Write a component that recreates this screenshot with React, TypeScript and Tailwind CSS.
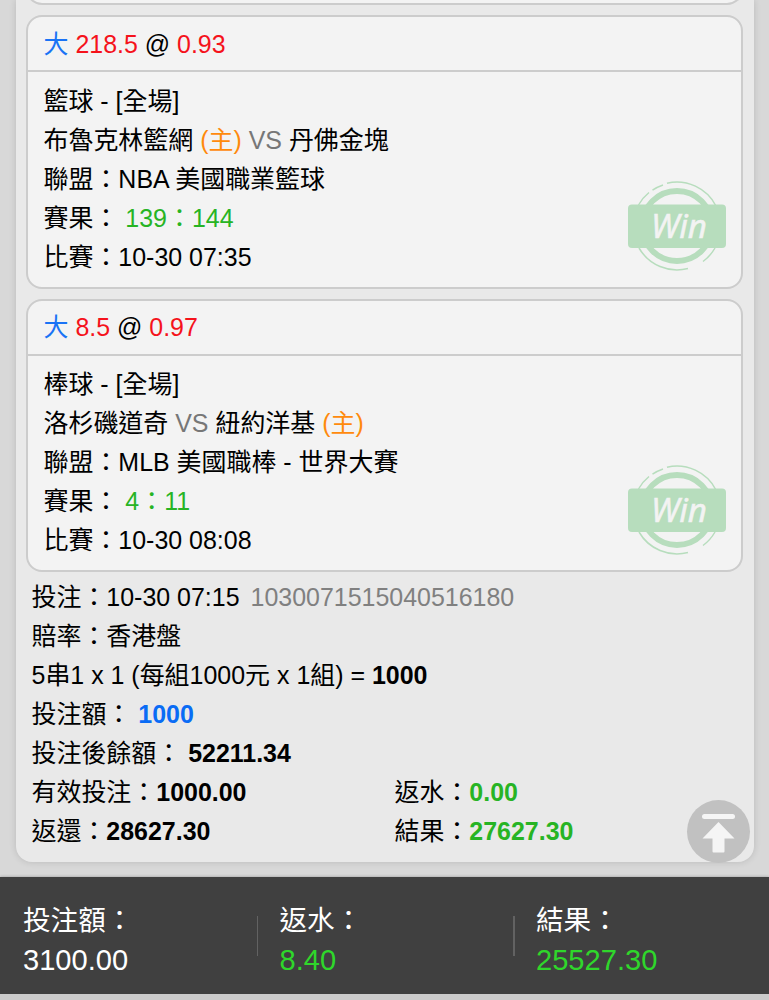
import React from 'react';

interface Team {
  name: string;
  home?: boolean;
}

interface Bet {
  line: string;
  odds: string;
  sport: string;
  teams: [Team, Team];
  league: string;
  score: string;
  time: string;
}

const bets: Bet[] = [
  {
    line: '218.5',
    odds: '0.93',
    sport: '籃球 - [全場]',
    teams: [{ name: '布魯克林籃網', home: true }, { name: '丹佛金塊' }],
    league: 'NBA 美國職業籃球',
    score: '139：144',
    time: '10-30 07:35',
  },
  {
    line: '8.5',
    odds: '0.97',
    sport: '棒球 - [全場]',
    teams: [{ name: '洛杉磯道奇' }, { name: '紐約洋基', home: true }],
    league: 'MLB 美國職棒 - 世界大賽',
    score: '4：11',
    time: '10-30 08:08',
  },
];

const totals = [
  { label: '投注額：', value: '3100.00', color: 'text-white' },
  { label: '返水：', value: '8.40', color: 'text-[#2fd72b]' },
  { label: '結果：', value: '25527.30', color: 'text-[#2fd72b]' },
];

const WinStamp: React.FC = () => (
  <svg width="98" height="90" viewBox="0 0 98 90" className="absolute right-[15px] bottom-[15.5px]">
    <g fill="none" stroke="#b7ddbd">
      <circle cx="49" cy="45" r="35" strokeWidth="5.8" />
      {/* Broken outer ring */}
      <path d="M39 2.2A44 44 0 0 1 88 25" strokeWidth="1.5" />
      <path d="M24.5 9.2A44 44 0 0 1 35 4" strokeWidth="1.5" />
      <path d="M10.5 24A44 44 0 0 1 21 11.5" strokeWidth="1.5" />
      <path d="M11 67A44 44 0 0 0 60 87.6" strokeWidth="1.5" />
      <path d="M75 80.5A44 44 0 0 0 87 67" strokeWidth="1.5" />
    </g>
    <rect y="23.5" width="98" height="43.5" rx="4" fill="#b7ddbd" />
    <text
      x="51"
      y="56.5"
      textAnchor="middle"
      textLength="56"
      lengthAdjust="spacingAndGlyphs"
      fill="#f3f3f3"
      stroke="#f3f3f3"
      strokeWidth="0.5"
      className="font-['Noto_Sans',sans-serif] text-[32px] italic"
    >
      Win
    </text>
  </svg>
);

const TeamName: React.FC<{ team: Team }> = ({ team }) => (
  <>
    {team.name}
    {team.home && <span className="text-[#ff8a0c]"> (主)</span>}
  </>
);

const BetCard: React.FC<{ bet: Bet }> = ({ bet }) => (
  <div className="relative h-[273.5px] rounded-2xl border-2 border-[#cccccc] bg-[#f3f3f3]">
    <div className="h-[55px] border-b-2 border-[#cccccc] px-[15.5px] pt-[7.5px]">
      <span className="text-[#1a73f5]">大</span> <span className="text-[#f5121b]">{bet.line}</span> @{' '}
      <span className="text-[#f5121b]">{bet.odds}</span>
    </div>
    <div className="px-[15.5px] pt-[9.5px]">
      <div>{bet.sport}</div>
      <div>
        <TeamName team={bet.teams[0]} /> <span className="text-[#777777]">VS</span> <TeamName team={bet.teams[1]} />
      </div>
      <div>聯盟：{bet.league}</div>
      <div>
        賽果： <span className="text-[#27b424]">{bet.score}</span>
      </div>
      <div>比賽：{bet.time}</div>
    </div>
    <WinStamp />
  </div>
);

const App: React.FC = () => {
  return (
    <div
      lang="zh-Hant"
      className="relative flex h-[1000px] w-full flex-col overflow-hidden bg-[#d8d8d8] font-['Liberation_Sans','Noto_Sans_CJK_TC',sans-serif] text-[24.96px] leading-[39px] whitespace-nowrap text-black"
    >
      <div className="mx-[15.5px] h-[862px] shrink-0 rounded-b-[16px] bg-[#e9e9e9] px-[10.5px] shadow-[0_0_7px_rgba(0,0,0,0.14)]">
        {/* Tail of the previous card */}
        <div className="-mt-5 mb-[10px] h-[25px] rounded-b-2xl border-2 border-t-0 border-[#cccccc] bg-[#f3f3f3]"></div>

        <div className="flex flex-col gap-[10px]">
          {bets.map((bet) => (
            <BetCard key={bet.time} bet={bet} />
          ))}
        </div>

        <div className="px-[5.5px] pt-[5.5px]">
          <div>
            投注：10-30 07:15 <span className="ml-[4px] text-[#808080]">1030071515040516180</span>
          </div>
          <div>賠率：香港盤</div>
          <div>
            5串1 x 1 (每組1000元 x 1組) = <b>1000</b>
          </div>
          <div>
            投注額： <b className="text-[#0a6cf5]">1000</b>
          </div>
          <div>
            投注後餘額： <b>52211.34</b>
          </div>
          <div className="grid grid-cols-[363px_1fr]">
            <div>
              有效投注：<b>1000.00</b>
            </div>
            <div>
              返水：<b className="text-[#27b424]">0.00</b>
            </div>
            <div>
              返還：<b>28627.30</b>
            </div>
            <div>
              結果：<b className="text-[#27b424]">27627.30</b>
            </div>
          </div>
        </div>
      </div>

      {/* Back to top */}
      <button className="absolute top-[800px] left-[687px] size-[63px] rounded-full bg-[#c1c1c1]">
        <svg width="63" height="63" viewBox="0 0 63 63" fill="#f5f5f5">
          <rect x="15" y="14" width="33" height="5" rx="2.5" />
          <path d="M31.5 22L47.5 38.5H37.5V51.5Q37.5 52.5 36.5 52.5H26.5Q25.5 52.5 25.5 51.5V38.5H15.5Z" />
        </svg>
      </button>

      <div className="mt-[15px] grid h-[116.5px] shrink-0 grid-cols-[256.5px_256.5px_1fr] bg-[#404040] pt-[23px] shadow-[0_0_3px_rgba(0,0,0,0.3)]">
        {totals.map((item, i) => (
          <div key={item.label} className="flex">
            <div className={i > 0 ? 'mt-4 h-10 w-[1.5px] bg-[#626262]' : 'h-10 w-[1.5px]'}></div>
            <div className="pl-[21.5px]">
              <div className="pt-px text-[27.6px] leading-10 text-white">{item.label}</div>
              <div className={`-mt-px text-[29.1px] leading-10 ${item.color}`}>{item.value}</div>
            </div>
          </div>
        ))}
      </div>
      <div className="flex-1 bg-[#cbcbcb]"></div>
    </div>
  );
};

export default App;
